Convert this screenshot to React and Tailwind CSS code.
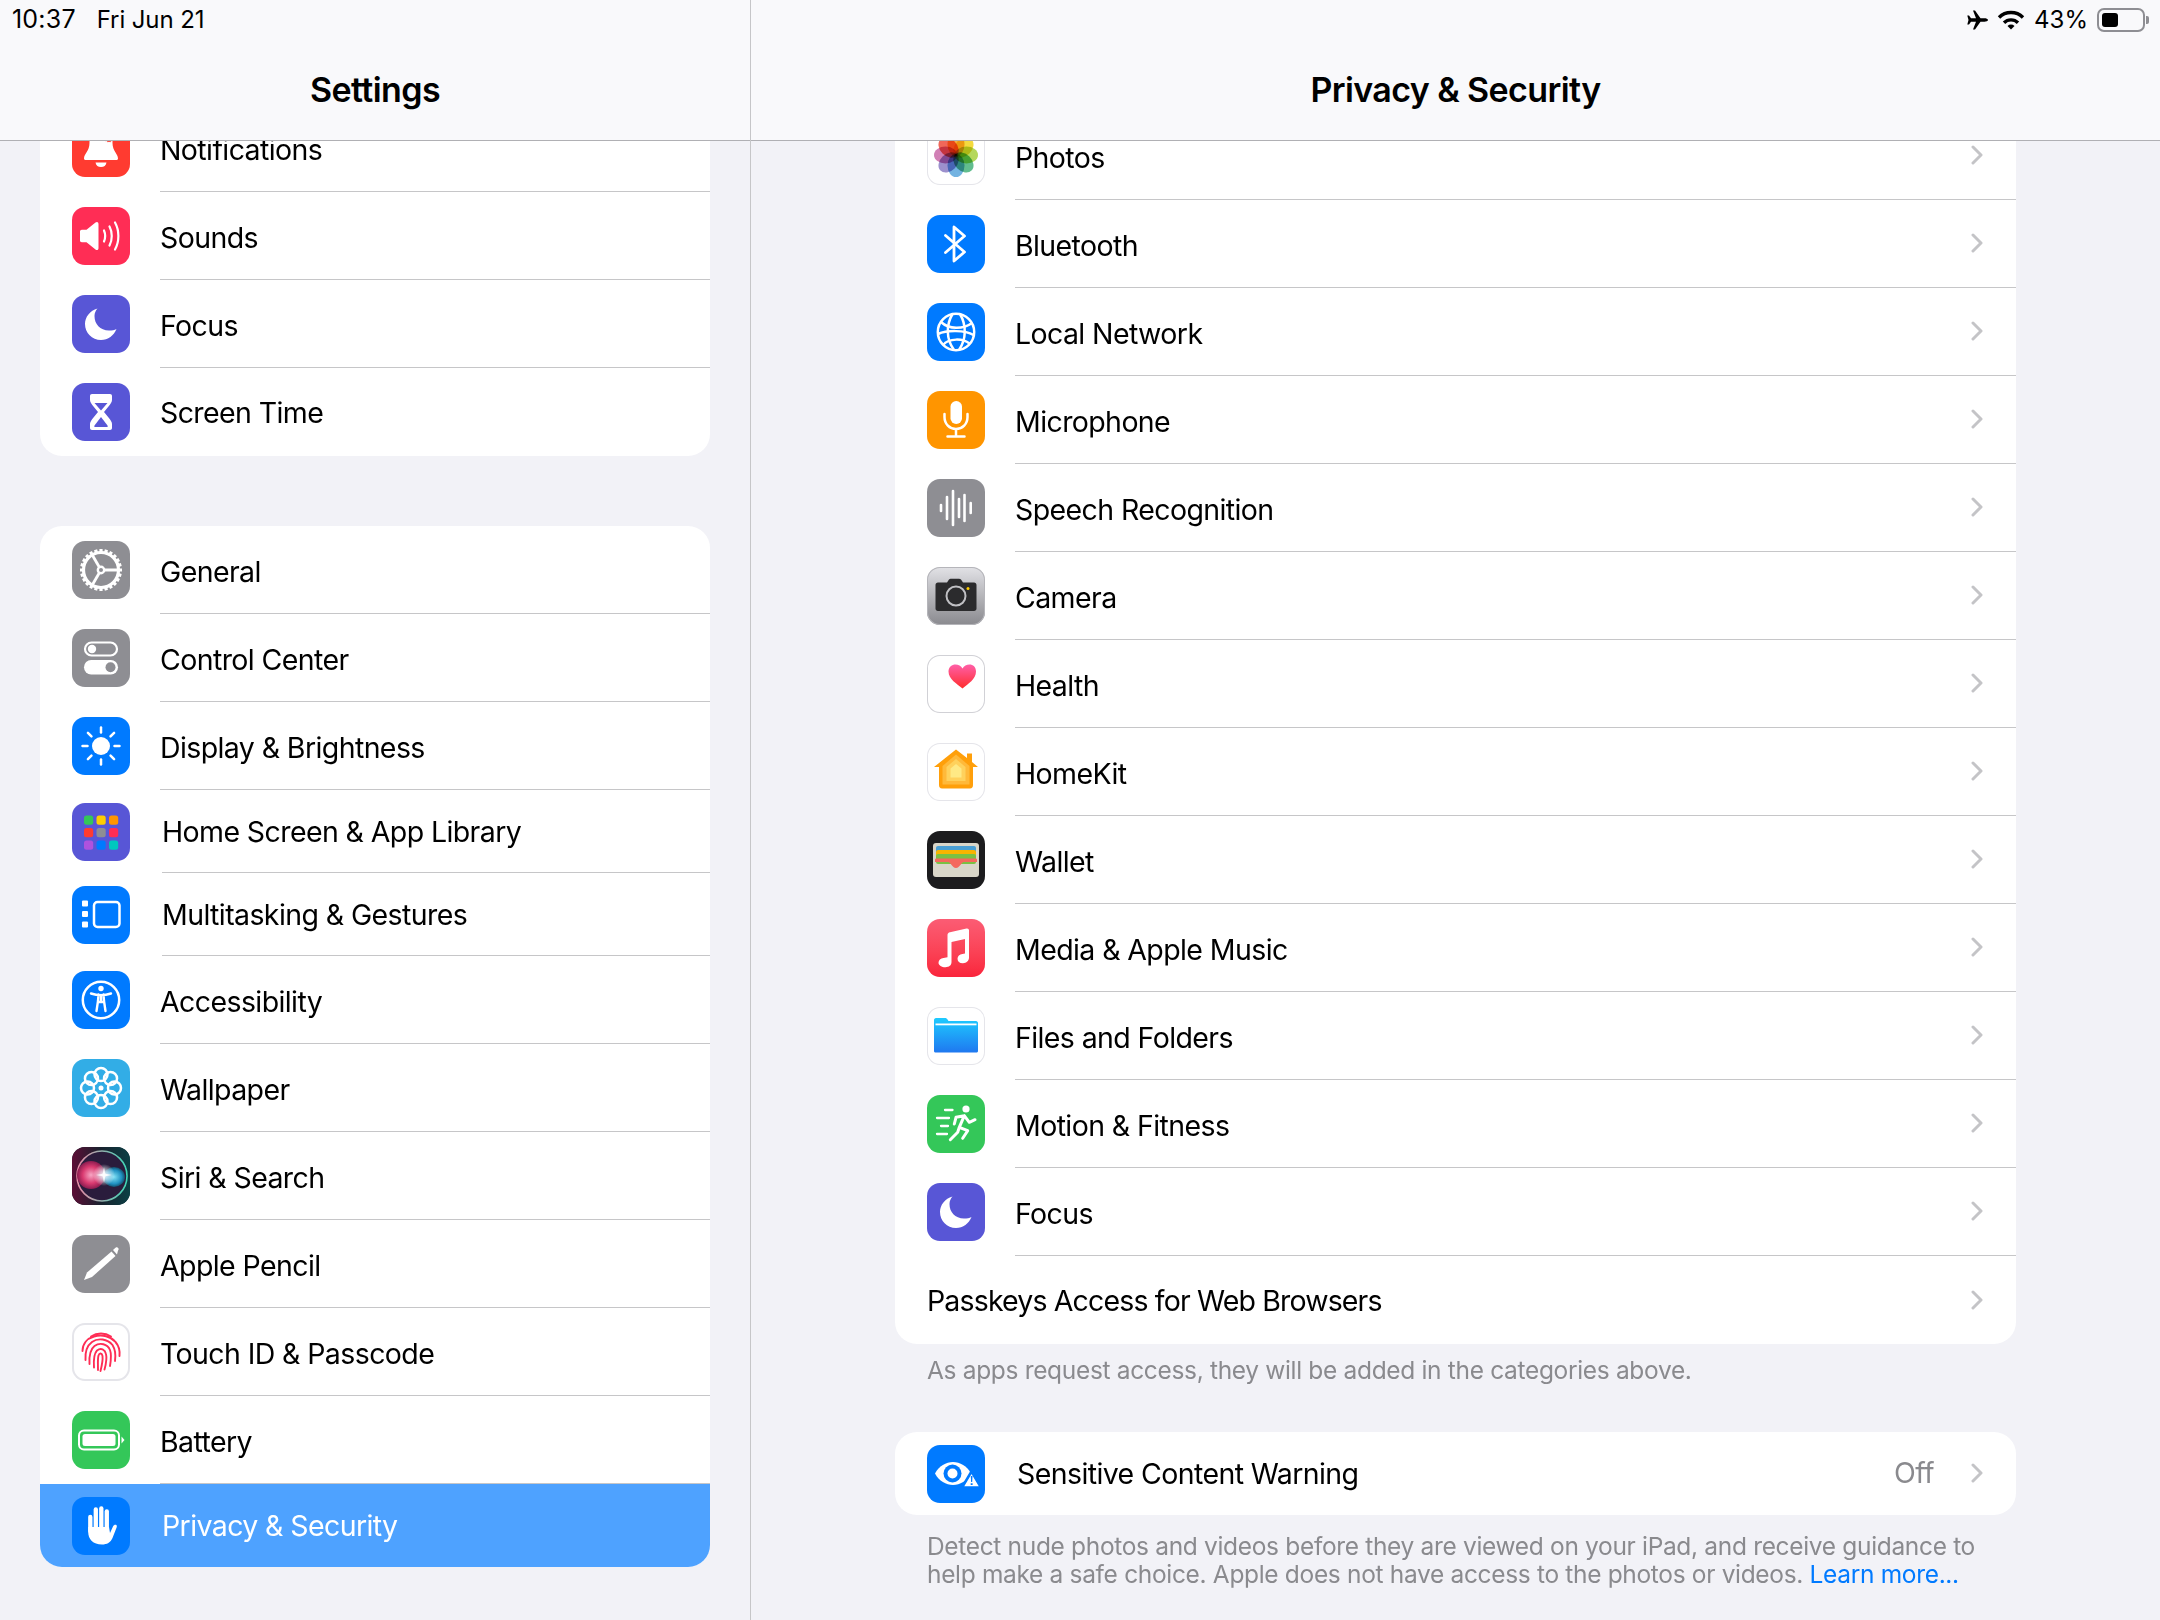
import React from "react";

const Box = ({ bg = "bg-white", ring = "", children }) => (
  <div className={`w-[58px] h-[58px] shrink-0 rounded-[13px] overflow-hidden ${bg} ${ring}`}>
    <svg viewBox="0 0 58 58" className="w-full h-full block">
      {children}
    </svg>
  </div>
);

const W = "#fff";

// ---- icons ----
const BellIcon = () => (
  <Box bg="bg-[#ff3b30]">
    <path fill={W} d="M29 8C20 8 17.500 16 17.500 24C17.500 32 12 35 12 39.500C12 40.500 13 41 14 41H44C45 41 46 40.500 46 39.500C46 35 40.500 32 40.500 24C40.500 16 38 8 29 8Z" />
    <path fill={W} d="M23.500 43.500H34.500C34 46.500 32 48 29 48C26 48 24 46.500 23.500 43.500Z" />
    <circle cx="37" cy="19" r="4.500" fill="#ff3b30" stroke={W} strokeWidth="1" />
  </Box>
);

const SoundIcon = () => (
  <Box bg="bg-[#ff2d55]">
    <path fill={W} d="M8 24.500C8 23.500 8.800 22.800 9.800 22.800H14.500L23.500 15.500C25 14.300 26.500 15 26.500 17V41C26.500 43 25 43.700 23.500 42.500L14.500 35.200H9.800C8.800 35.200 8 34.500 8 33.500Z" />
    <g fill="none" stroke={W} strokeWidth="2.200" strokeLinecap="round">
      <path d="M32 23.500C33.500 27 33.500 31 32 34.500" />
      <path d="M37.500 19.500C40.500 25 40.500 33 37.500 38.500" />
      <path d="M43 15.500C47.500 23.500 47.500 34.500 43 42.500" />
    </g>
  </Box>
);

const MoonIcon = () => (
  <Box bg="bg-[#5856d6]">
    <path fill={W} d="M25.500 13.500C18 15.500 13 22 13 29C13 37.700 20 45 29 45C36 45 42 40.500 44.500 34C42.500 35 40 35.500 37 35.500C28 35.500 22.500 29 22.500 21C22.500 18 23.700 15.500 25.500 13.500Z" />
  </Box>
);

const HourglassIcon = () => (
  <Box bg="bg-[#5856d6]">
    <path fill={W} d="M18 13C18 11.800 18.800 11 20 11H38C39.200 11 40 11.800 40 13V17C40 19 38.500 21 36.500 23.500L32 29L36.500 34.500C38.500 37 40 39 40 41V45C40 46.200 39.200 47 38 47H20C18.800 47 18 46.200 18 45V41C18 39 19.500 37 21.500 34.500L26 29L21.500 23.500C19.500 21 18 19 18 17Z" />
    <path fill="#5856d6" d="M22.500 20H35.500L29 27.500Z" />
    <path fill="#5856d6" d="M29 34L35.500 42.500C36 43.500 35.500 44 35 44H23C22.500 44 22 43.500 22.500 42.500Z" />
  </Box>
);

const GearIcon = () => (
  <Box bg="bg-[#8e8e93]">
    <g stroke={W}>
      {Array.from({ length: 24 }).map((_, i) => (
        <line key={i} x1="29" y1="8" x2="29" y2="12" strokeWidth="3.200" transform={`rotate(${i * 15} 29 29)`} />
      ))}
      <circle cx="29" cy="29" r="17.500" fill="none" strokeWidth="3.200" />
      <circle cx="29" cy="29" r="3.200" fill="none" strokeWidth="2.400" />
      <line x1="32" y1="29" x2="46" y2="29" strokeWidth="2.800" />
      <line x1="27.500" y1="26.500" x2="20" y2="13.500" strokeWidth="2.800" />
      <line x1="27.500" y1="31.500" x2="20" y2="44.500" strokeWidth="2.800" />
    </g>
  </Box>
);

const ControlIcon = () => (
  <Box bg="bg-[#8e8e93]">
    <rect x="13" y="13.500" width="32" height="13" rx="6.500" fill="none" stroke={W} strokeWidth="2.200" />
    <circle cx="20" cy="20" r="4.200" fill={W} />
    <rect x="12" y="31" width="34" height="14.500" rx="7.200" fill={W} />
    <circle cx="38.500" cy="38.200" r="5" fill="#8e8e93" />
  </Box>
);

const SunIcon = () => (
  <Box bg="bg-[#007aff]">
    <circle cx="29" cy="29" r="9" fill={W} />
    <g stroke={W} strokeWidth="2.500" strokeLinecap="round">
      {[0, 45, 90, 135, 180, 225, 270, 315].map((a) => (
        <line key={a} x1="29" y1="10.500" x2="29" y2="15.500" transform={`rotate(${a} 29 29)`} />
      ))}
    </g>
  </Box>
);

const GridIcon = () => {
  const colors = ["#34c759", "#ffcc00", "#ff9500", "#ff3b30", "#8e8e93", "#ff2d55", "#af52de", "#007aff", "#00c7be"];
  return (
    <Box bg="bg-[#5856d6]">
      {colors.map((c, i) => (
        <rect key={c} x={12 + (i % 3) * 12.5} y={12.500 + Math.floor(i / 3) * 12.5} width="9.200" height="9.200" rx="2.500" fill={c} />
      ))}
    </Box>
  );
};

const MultitaskIcon = () => (
  <Box bg="bg-[#007aff]">
    <rect x="10" y="14.500" width="6" height="6" rx="1" fill={W} />
    <rect x="10" y="25" width="6" height="6" rx="1" fill={W} />
    <rect x="10" y="35.500" width="6" height="6" rx="1" fill={W} />
    <rect x="22" y="16" width="25.500" height="25" rx="3.500" fill="none" stroke={W} strokeWidth="2.500" />
  </Box>
);

const AccessIcon = () => (
  <Box bg="bg-[#007aff]">
    <circle cx="29" cy="29" r="18.200" fill="none" stroke={W} strokeWidth="2.500" />
    <circle cx="29" cy="17.500" r="2.700" fill={W} />
    <path fill="none" stroke={W} strokeWidth="2.400" strokeLinecap="round" strokeLinejoin="round" d="M19 22.500C25 24.500 33 24.500 39 22.500M29 24V30M26.500 23.500L26 30L24.500 40M31.500 23.500L32 30L33.500 40M26 31H32" />
  </Box>
);

const FlowerIcon = () => (
  <Box bg="bg-[#32ade6]">
    {[0, 45, 90, 135, 180, 225, 270, 315].map((a) => (
      <circle key={a} cx="29" cy="15.500" r="6.500" fill="none" stroke={W} strokeWidth="2.500" transform={`rotate(${a} 29 29)`} />
    ))}
    <circle cx="29" cy="29" r="2.500" fill={W} />
  </Box>
);

const SiriIcon = () => (
  <Box bg="bg-[#0e2a33]">
    <defs>
      <linearGradient id="siriBg" x1="0" y1="0" x2="1" y2="0">
        <stop offset="0" stopColor="#5c0e36" />
        <stop offset="0.5" stopColor="#18222e" />
        <stop offset="1" stopColor="#0b4045" />
      </linearGradient>
      <radialGradient id="siriGlow">
        <stop offset="0" stopColor="#fff" />
        <stop offset="0.4" stopColor="#e8f6ff" stopOpacity="0.7" />
        <stop offset="1" stopColor="#fff" stopOpacity="0" />
      </radialGradient>
      <linearGradient id="siriRing" x1="0" y1="0" x2="1" y2="0">
        <stop offset="0" stopColor="#e88aa6" />
        <stop offset="1" stopColor="#3fd6b6" />
      </linearGradient>
      <radialGradient id="siriPink">
        <stop offset="0" stopColor="#f7a6c4" />
        <stop offset="0.6" stopColor="#d93a70" />
        <stop offset="1" stopColor="#8c1c50" />
      </radialGradient>
      <radialGradient id="siriBlue">
        <stop offset="0" stopColor="#7fe0f5" />
        <stop offset="0.7" stopColor="#1f8fc0" />
        <stop offset="1" stopColor="#14506e" />
      </radialGradient>
    </defs>
    <rect width="58" height="58" fill="url(#siriBg)" />
    <circle cx="30" cy="29" r="25" fill="#2a1c3c" stroke="url(#siriRing)" strokeWidth="1.600" />
    <ellipse cx="19" cy="28" rx="14" ry="14" fill="url(#siriPink)" />
    <ellipse cx="42" cy="30" rx="11" ry="10" fill="url(#siriBlue)" />
    <circle cx="32" cy="28" r="11" fill="url(#siriGlow)" />
    <path d="M32 20L33.300 26.700L40 28L33.300 29.300L32 36L30.700 29.300L24 28L30.700 26.700Z" fill={W} opacity="0.85" />
  </Box>
);

const PencilIcon = () => (
  <Box bg="bg-[#8e8e93]">
    <path fill={W} d="M12 45L15 37.500L39.500 16.500L43.500 21L20 42Z" />
    <path fill={W} d="M41 15L43.500 12.800C44.500 12 45.500 12.200 46.200 13C46.800 13.800 46.800 14.800 46 15.600L45 19.500Z" />
  </Box>
);

const FingerprintIcon = () => (
  <Box ring="ring-2 ring-inset ring-[#e5e5ea]">
    <g fill="none" stroke="#ff2d55" strokeWidth="1.900" strokeLinecap="round">
      <path d="M19 13.500C25 9.500 33 9.500 39 13.500" />
      <path d="M10.500 28C10.500 21 15 15.500 22 13.500C30 11 39 13.500 43.500 19C47 23 48 28 47.500 33" />
      <path d="M13.500 37C13 29 14.500 23 20 19C26 14.500 35.500 16 40.500 22C43 26 44 31 43 38" />
      <path d="M17.500 41C17 33 18 26.500 22.500 23C28 19 35.500 21 38 27C39.500 31 39 37 38 43" />
      <path d="M22 44.500C21.500 37 21.500 31 25 27.500C29 24.500 33 26.500 34 31C35 35 34 41 32.500 46.500" />
      <path d="M26 47C26 41 25.500 36 26.500 32.500C27.500 29.500 30 30 30.500 33C31 37 30 42 28.500 48" />
    </g>
  </Box>
);

const BatteryIcon = () => (
  <Box bg="bg-[#34c759]">
    <rect x="7" y="19.500" width="40" height="19" rx="5" fill="none" stroke={W} strokeWidth="2" />
    <rect x="10.500" y="23" width="33" height="12" rx="2.500" fill={W} />
    <path d="M49.500 25.500L52.500 29L49.500 32.500Z" fill={W} />
  </Box>
);

const HandIcon = () => (
  <Box bg="bg-[#007aff]">
    <g stroke={W} strokeWidth="4.300" strokeLinecap="round" fill="none">
      <line x1="18.300" y1="34" x2="18.300" y2="20" />
      <line x1="23.800" y1="34" x2="23.800" y2="12.500" />
      <line x1="29.300" y1="34" x2="29.300" y2="11.500" />
      <line x1="34.800" y1="34" x2="34.800" y2="14.500" />
    </g>
    <path fill={W} d="M16.200 30H37L38 36L41 29.500C41.600 28 43 27.300 44 27.800C45 28.300 45 29.500 44.600 30.500L40.500 41C38.500 45.500 35 47.500 30 47.500C21 47.500 16.200 42 16.200 35Z" />
  </Box>
);

const PhotosIcon = () => {
  const petals = ["#f6a31f", "#f3d41c", "#a8d13e", "#46b27a", "#5aa6dc", "#8b7cc4", "#c96aa8", "#ee4c3c"];
  return (
    <Box ring="ring-1 ring-inset ring-[#e5e5ea]">
      {petals.map((c, i) => (
        <ellipse key={c} cx="29" cy="17.500" rx="8.500" ry="11.500" fill={c} opacity="0.85" className="mix-blend-multiply" transform={`rotate(${i * 45} 29 28)`} />
      ))}
    </Box>
  );
};

const BluetoothIcon = () => (
  <Box bg="bg-[#007aff]">
    <path fill="none" stroke={W} strokeWidth="2.800" strokeLinecap="round" strokeLinejoin="round" d="M18.500 20.500L37.500 37L27 46V12L37.500 21L18.500 37.500" />
  </Box>
);

const GlobeIcon = () => (
  <Box bg="bg-[#007aff]">
    <g fill="none" stroke={W} strokeWidth="2.500">
      <circle cx="29" cy="29" r="18.200" />
      <path d="M25.500 11C19 22 19 36 27 47" />
      <path d="M33 11C39.500 22 39.500 36 32 47" />
      <path d="M14 19C22 26.500 36 26.500 45 20" />
      <path d="M11 31C20 27 38 27 46.500 32" />
      <path d="M16 42C22 35 36 35 43 41" />
    </g>
  </Box>
);

const MicIcon = () => (
  <Box bg="bg-[#ff9500]">
    <rect x="23.500" y="10" width="11.500" height="23" rx="5.700" fill={W} />
    <path fill="none" stroke={W} strokeWidth="2.500" strokeLinecap="round" d="M17.500 23V26C17.500 33 22.500 38 29 38C35.500 38 40.500 33 40.500 26V23M29 38V45M20.500 45.500H37.500" />
  </Box>
);

const SpeechIcon = () => (
  <Box bg="bg-[#8e8e93]">
    <g stroke={W} strokeWidth="2.600" strokeLinecap="round">
      <line x1="14" y1="26" x2="14" y2="32" />
      <line x1="20" y1="18" x2="20" y2="40" />
      <line x1="26" y1="12" x2="26" y2="46" />
      <line x1="32" y1="20" x2="32" y2="38" />
      <line x1="37.500" y1="16" x2="37.500" y2="42" />
      <line x1="43.700" y1="24" x2="43.700" y2="34" />
    </g>
  </Box>
);

const CameraIcon = () => (
  <Box bg="bg-gradient-to-b from-[#e2e2e6] to-[#8a8a8f]" ring="ring-1 ring-inset ring-[#b5b5ba]">
    <path fill="#2b2b2d" d="M11 15.500H20L22 12.500C22.500 12 23 11.700 23.500 11.700H32C32.800 11.700 33.500 12 34 12.500L36 15.500H47C48.500 15.500 49.500 16.500 49.500 18V41.500C49.500 43 48.500 44 47 44H11C9.500 44 8.500 43 8.500 41.500V18C8.500 16.500 9.500 15.500 11 15.500Z" />
    <circle cx="29" cy="29" r="9.500" fill="none" stroke="#c0c0c4" strokeWidth="2" />
    <circle cx="41" cy="21.500" r="1.500" fill="#ffcc00" />
  </Box>
);

const HeartIcon = () => (
  <Box ring="ring-1 ring-inset ring-[#d1d1d6]">
    <defs>
      <linearGradient id="heartFill" x1="0" y1="0" x2="0" y2="1">
        <stop offset="0" stopColor="#ff5fa8" />
        <stop offset="1" stopColor="#ff2d2d" />
      </linearGradient>
    </defs>
    <path fill="url(#heartFill)" d="M35.500 33.500C30 29 21.500 24 21.500 16.500C21.500 12 25 9.500 28.500 9.500C31.500 9.500 34 11 35.500 13.500C37 11 39.500 9.500 42.500 9.500C46 9.500 49 12 49 16.500C49 24 41 29 35.500 33.500Z" />
  </Box>
);

const HomeIcon = () => (
  <Box ring="ring-1 ring-inset ring-[#e5e5ea]">
    <path fill="#ff9f0a" d="M29 6.500L40 15V10.500H45V19L51 24H46V42C46 44 45 45.500 43 45.500H15C13 45.500 12 44 12 42V24H7Z" />
    <path fill="#ffb93a" d="M29 11.500L42.500 23V41.500H15.500V23Z" />
    <path fill="#ffd15c" d="M29 16L38.500 24V38H19.500V24Z" />
    <path fill="#ffe985" d="M29 21L34.500 25.500V34.500H23.500V25.500Z" />
  </Box>
);

const WalletIcon = () => (
  <Box bg="bg-[#1c1c1e]">
    <rect x="6" y="12" width="46" height="34" rx="3" fill="#d9d6c9" />
    <rect x="9" y="15" width="40" height="12" rx="2" fill="#4a9fd4" />
    <rect x="9" y="19" width="40" height="12" rx="2" fill="#f7b500" />
    <rect x="9" y="23" width="40" height="10" rx="2" fill="#7ac143" />
    <path fill="#f4695d" d="M8 29C8 28 8.500 27.500 9.500 27.500H48.500C49.500 27.500 50 28 50 29V31H37C34 31 33 37 29 37C25 37 24 31 21 31H8Z" />
  </Box>
);

const MusicIcon = () => (
  <Box bg="bg-gradient-to-b from-[#fb5c74] to-[#fa233b]">
    <path fill={W} d="M20.500 16C20.500 14.500 21.500 13.500 23 13.200L39.500 9.500C41 9.200 42 10 42 11.500V38.500C42 42 39.500 44 36 44.200C32.500 44.300 30.500 42.300 30.500 39.700C30.500 37 32.500 35.500 35.500 35L38 34.500V20L24.500 23V43C24.500 46.500 22 48 18.500 48.200C15 48.300 11.500 46.500 11.500 43.700C11.500 41 13.500 39.500 16.500 39L20.500 38.300Z" />
  </Box>
);

const FolderIcon = () => (
  <Box ring="ring-1 ring-inset ring-[#e5e5ea]">
    <defs>
      <linearGradient id="folderFill" x1="0" y1="0" x2="0" y2="1">
        <stop offset="0" stopColor="#1ecbff" />
        <stop offset="1" stopColor="#1f78f0" />
      </linearGradient>
    </defs>
    <path fill="url(#folderFill)" d="M7 13C7 12 7.800 11 9 11H18C19 11 20 11.500 20.500 12.500L21.500 14H49C50.200 14 51 15 51 16V44C51 45 50.200 45.500 49 45.500H9C7.800 45.500 7 45 7 44Z" />
    <rect x="8.500" y="16.500" width="41" height="1.800" fill={W} />
  </Box>
);

const RunnerIcon = () => (
  <Box bg="bg-[#34c759]">
    <circle cx="39" cy="14" r="3.600" fill={W} />
    <g fill="none" stroke={W} strokeWidth="2.300" strokeLinecap="round">
      <path d="M18 15H25.500M10 23H22M14 31H21M10 39H20" />
    </g>
    <path fill="none" stroke={W} strokeWidth="3" strokeLinecap="round" strokeLinejoin="round" d="M48 24.700L42.300 27.300L37.300 20.700L32.300 32.300L40.700 35.700L35.700 43.300M32.300 32.300L30.700 37.300L23.300 44.700M37.300 20.700L29 22.300L27.300 29" />
  </Box>
);

const EyeIcon = () => (
  <Box bg="bg-[#007aff]">
    <path fill={W} d="M8 28.500C12 21 19 17 26 17C33 17 40 21 44 28.500C40 36 33 40 26 40C19 40 12 36 8 28.500Z" />
    <circle cx="25.500" cy="28.500" r="9" fill="#007aff" />
    <circle cx="25.500" cy="28.500" r="5" fill={W} />
    <path fill={W} stroke="#007aff" strokeWidth="2.500" strokeLinejoin="round" d="M44.500 26.500L54 42.500H35Z" />
    <path fill="#007aff" d="M43.800 31H45.500L45.200 37H44.100ZM43.700 38.300H45.600V40H43.700Z" />
  </Box>
);

const Chevron = () => (
  <svg viewBox="0 0 12 20" className="w-[12px] h-[20px] ml-[37px] mb-[1px] shrink-0">
    <path d="M2 2L10 10L2 18" fill="none" stroke="#c4c4c7" strokeWidth="3" strokeLinecap="round" strokeLinejoin="round" />
  </svg>
);

const SideRow = ({ icon, label, height = "h-[88px]", inset = "ml-[30px]", last = false, active = false }) => (
  <div className={`flex items-center pl-[32px] ${height} ${active ? "bg-[#4ea2ff] text-white" : ""}`}>
    {icon}
    <div className={`flex items-center flex-1 h-full ${inset} ${last ? "" : "border-b border-[#c6c6c8]"}`}>
      <span className={last || height !== "h-[88px]" ? "pt-[2px]" : "pt-[5px]"}>{label}</span>
    </div>
  </div>
);

const MainRow = ({ icon, label, value, inset = "ml-[30px]", height = "h-[88px]", last = false, labelClass = "" }) => (
  <div className={`flex items-center pl-[32px] ${height}`}>
    {icon}
    <div className={`flex items-center flex-1 h-full pr-[33px] ${icon ? inset : ""} ${last ? "" : "border-b border-[#c6c6c8]"}`}>
      <span className={`${last ? "pt-[2px]" : "pt-[5px]"} ${labelClass}`}>{label}</span>
      <div className="flex items-center ml-auto">
        {value && <span className="text-[#8a8a8e]">{value}</span>}
        <Chevron />
      </div>
    </div>
  </div>
);

const HEADER_TITLE = "flex items-center justify-center h-[100px] pb-[2px] text-[34px] font-semibold tracking-[-0.6px]";

const App = () => {
  const mainRows = [
    [<PhotosIcon />, "Photos"],
    [<BluetoothIcon />, "Bluetooth"],
    [<GlobeIcon />, "Local Network"],
    [<MicIcon />, "Microphone"],
    [<SpeechIcon />, "Speech Recognition"],
    [<CameraIcon />, "Camera"],
    [<HeartIcon />, "Health"],
    [<HomeIcon />, "HomeKit"],
    [<WalletIcon />, "Wallet"],
    [<MusicIcon />, "Media & Apple Music"],
    [<FolderIcon />, "Files and Folders"],
    [<RunnerIcon />, "Motion & Fitness"],
    [<MoonIcon />, "Focus"],
  ];

  return (
    <div className="flex w-[2160px] h-[1620px] overflow-hidden bg-[#f2f2f7] text-black text-[28.5px] tracking-[-0.6px] [font-family:Inter,sans-serif]">
      {/* Sidebar */}
      <div className="flex flex-col w-[751px] h-full shrink-0 border-r border-[#c6c6c8]">
        <div className="h-[141px] shrink-0 bg-[#f9f9fb] border-b border-[#b0b0b4] relative z-10">
          <div className="flex items-center gap-[21px] h-[40px] pl-[12px] text-[25px] tracking-[0.2px]">
            <span>10:37</span>
            <span className="text-[24px] tracking-[-0.1px]">Fri Jun 21</span>
          </div>
          <div className={HEADER_TITLE}>Settings</div>
        </div>
        <div className="flex-1 overflow-hidden px-[40px]">
          <div className="-mt-[37px] bg-white rounded-b-[22px]">
            <SideRow icon={<BellIcon />} label="Notifications" />
            <SideRow icon={<SoundIcon />} label="Sounds" />
            <SideRow icon={<MoonIcon />} label="Focus" />
            <SideRow icon={<HourglassIcon />} label="Screen Time" last />
          </div>
          <div className="mt-[70px] bg-white rounded-[22px] overflow-hidden">
            <SideRow icon={<GearIcon />} label="General" />
            <SideRow icon={<ControlIcon />} label="Control Center" />
            <SideRow icon={<SunIcon />} label="Display & Brightness" />
            <SideRow icon={<GridIcon />} label="Home Screen & App Library" height="h-[83px]" inset="ml-[32px]" />
            <SideRow icon={<MultitaskIcon />} label="Multitasking & Gestures" height="h-[83px]" inset="ml-[32px]" />
            <SideRow icon={<AccessIcon />} label="Accessibility" />
            <SideRow icon={<FlowerIcon />} label="Wallpaper" />
            <SideRow icon={<SiriIcon />} label="Siri & Search" />
            <SideRow icon={<PencilIcon />} label="Apple Pencil" />
            <SideRow icon={<FingerprintIcon />} label="Touch ID & Passcode" />
            <SideRow icon={<BatteryIcon />} label="Battery" />
            <SideRow icon={<HandIcon />} label="Privacy & Security" height="h-[83px]" inset="ml-[32px]" last active />
          </div>
        </div>
      </div>

      {/* Detail */}
      <div className="flex flex-col flex-1 h-full min-w-0">
        <div className="h-[141px] shrink-0 bg-[#f9f9fb] border-b border-[#b0b0b4] relative z-10">
          <div className="flex items-center justify-end h-[40px] pr-[15px] text-[24px] tracking-normal">
            <svg viewBox="0 0 22 20" className="w-[23px] h-[20px]">
              <path d="M21.500 10C21.500 8.900 19.500 8.300 18 8.300H14L8.500 .5H6.500L9.500 8.300H4.500L2.500 5.500H.8L2 10L.8 14.500H2.500L4.500 11.700H9.500L6.500 19.500H8.500L14 11.700H18C19.500 11.700 21.500 11.100 21.500 10Z" />
            </svg>
            <svg viewBox="0 0 28 20" className="w-[28px] h-[20px] ml-[8px]">
              <path fill="none" stroke="#000" strokeWidth="3.400" d="M2 7.500A17 17 0 0 1 26 7.500M7 12.700A10 10 0 0 1 21 12.700" />
              <path d="M10.500 16L14 19.500L17.500 16A5 5 0 0 0 10.500 16Z" />
            </svg>
            <span className="ml-[9px]">43%</span>
            <div className="relative flex items-center w-[48px] h-[24px] ml-[9px] p-[3px] rounded-[7px] border-2 border-[#8e8e93]">
              <div className="w-[16px] h-full rounded-[3px] bg-black" />
              <div className="absolute -right-[6px] top-[6px] w-[3px] h-[8px] rounded-r-[2px] bg-[#8e8e93]" />
            </div>
          </div>
          <div className={HEADER_TITLE}>Privacy &amp; Security</div>
        </div>
        <div className="flex-1 overflow-hidden px-[144px]">
          <div className="-mt-[29px] bg-white rounded-b-[22px] overflow-hidden">
            {mainRows.map(([icon, label]) => (
              <MainRow key={label} icon={icon} label={label} />
            ))}
            <MainRow label="Passkeys Access for Web Browsers" labelClass="tracking-[-0.85px]" last />
          </div>
          <p className="h-[88px] pl-[32px] pt-[12px] text-[24.5px] leading-[28px] tracking-[-0.33px] text-[#8a8a8e]">
            As apps request access, they will be added in the categories above.
          </p>
          <div className="bg-white rounded-[22px] overflow-hidden">
            <MainRow icon={<EyeIcon />} label="Sensitive Content Warning" value="Off" inset="ml-[32px]" height="h-[83px]" last />
          </div>
          <p className="pl-[32px] pr-[21px] pt-[17px] text-[24.5px] leading-[28px] tracking-[-0.33px] text-[#8a8a8e]">
            Detect nude photos and videos before they are viewed on your iPad, and receive guidance to help make a safe choice. Apple does not have access to the photos or videos.{" "}
            <span className="text-[#007aff]">Learn more...</span>
          </p>
        </div>
      </div>
    </div>
  );
};

export default App;
